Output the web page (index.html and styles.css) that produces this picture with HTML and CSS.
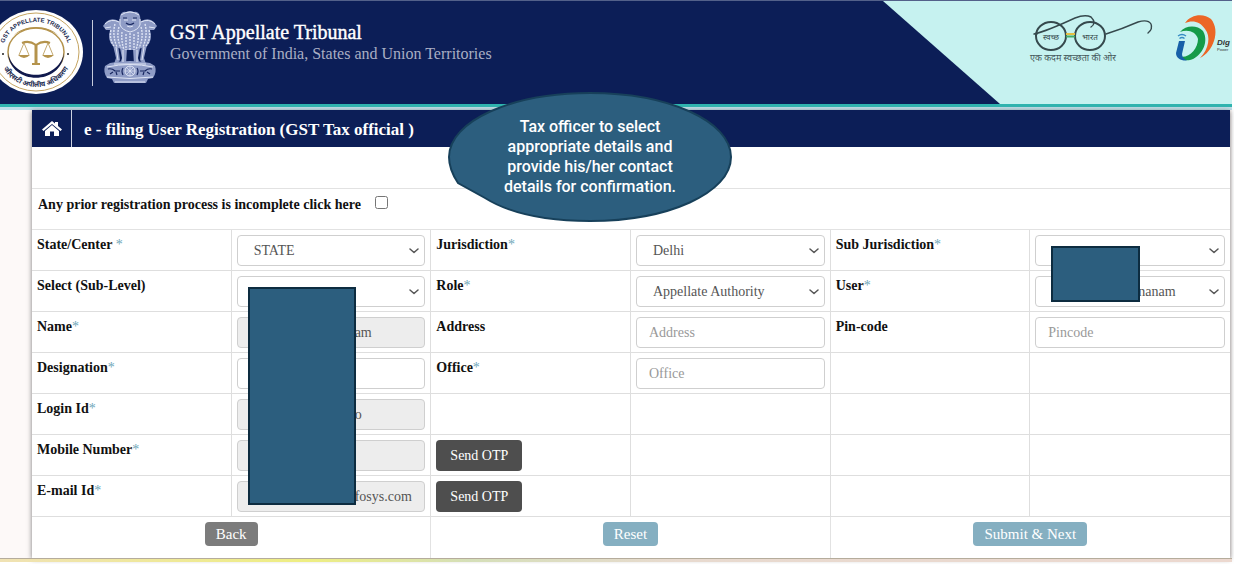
FILE: index.html
```html
<!DOCTYPE html>
<html lang="en">
<head>
<meta charset="utf-8">
<title>GST Appellate Tribunal - User Registration</title>
<link rel="stylesheet" href="styles.css">
</head>
<body>
<svg class="defs" width="0" height="0" aria-hidden="true">
  <symbol id="chevron" viewBox="0 0 10 6"><path d="M1 1 L5 4.500 L9 1" fill="none" stroke="#555" stroke-width="1.500" stroke-linejoin="round" stroke-linecap="round"/></symbol>
</svg>
<header class="header">
  <svg class="seal" viewBox="0 0 94 84" role="img" aria-label="GST Appellate Tribunal seal">
    <defs>
      <path id="arcTop" d="M15 48 A33 29 0 1 1 79 48"/>
      <path id="arcBottom" d="M11 44 A36 33 0 0 0 83 44"/>
    </defs>
    <ellipse cx="47" cy="42" rx="47" ry="42" fill="#fff"/>
    <ellipse cx="47" cy="42" rx="43" ry="39" fill="none" stroke="#c5a562"/>
    <ellipse cx="47" cy="42" rx="28" ry="24" fill="none" stroke="#b4934c" stroke-width="1.500"/>
    <path d="M19 43 C21 76 73 76 75 43 C69 72 25 72 19 43" fill="#10194d"/>
    <path d="M24 26 C35 14 59 14 70 26 C59 16 35 16 24 26" fill="#b4934c"/>
    <text class="seal-text"><textPath href="#arcTop" startOffset="50%" text-anchor="middle">GST APPELLATE TRIBUNAL</textPath></text>
    <text class="seal-text seal-hindi"><textPath href="#arcBottom" startOffset="50%" text-anchor="middle">जीएसटी अपीलीय अधिकरण</textPath></text>
    <g fill="none" stroke="#b4934c">
      <path d="M33 33 Q40 30 47 35 Q54 30 61 33" stroke-width="2"/>
      <path d="M47 34 V54" stroke-width="3"/>
      <path d="M43 54 H51" stroke-width="2"/>
      <path d="M35 33 L30 45 M35 33 L40 45 M59 33 L54 45 M59 33 L64 45" stroke-width="0.800"/>
    </g>
    <path d="M29 45 H41 Q35 51 29 45 M53 45 H65 Q59 51 53 45" fill="#b4934c"/>
    <circle cx="14" cy="44" r="1" fill="#222"/><circle cx="79" cy="44" r="1" fill="#222"/>
  </svg>
  <span class="header-rule"></span>
  <svg class="emblem" viewBox="0 0 56 74" role="img" aria-label="State Emblem of India">
    <g fill="#8f9cc6">
      <path d="M18 6 Q20 1 24 2 Q28 0 32 2 Q36 1 38 6 L39 14 Q38 20 35 23 H21 Q18 19 17 14Z"/>
      <path d="M17 11 Q9 7 4 12 L1 16 L4 20 L8 20 Q5 30 11 36 L22 40 H28 V22Z"/>
      <path d="M39 11 Q47 7 52 12 L55 16 L52 20 L48 20 Q51 30 45 36 L34 40 H28 V22Z"/>
      <path d="M11 35 H16 L18 50 L15 54 H12 L14 48Z M18 38 H25 L24 54 H18 L20 48Z M31 38 H38 L36 48 L38 54 H32Z M40 35 H45 L42 48 L44 54 H41 L38 50Z"/>
      <path d="M8 53 Q28 49 48 53 L53 56 Q55 62 51 68 L46 69 L44 73 H12 L10 69 L5 68 Q1 62 3 56Z"/>
    </g>
    <g fill="none" stroke="#dfe5f5">
      <path d="M3 14 Q9 8 17 12 M53 14 Q47 8 39 12 M19 5 Q28 -1 37 5 M18 9 V15 Q20 20 28 22 Q36 20 38 15 V9 M22 10 H26 M30 10 H34 M25 16 Q28 18 31 16 M3 18 L9 17 M53 18 L47 17"/>
      <path d="M9 20 Q7 29 12 36 M13 14 Q10 25 15 37 M17 17 Q14 27 19 38 M20 22 Q19 30 22 40 M24 24 V40 M28 23 V41 M32 24 V40 M36 22 Q37 30 34 40 M39 17 Q42 27 37 38 M43 14 Q46 25 41 37 M47 20 Q49 29 44 36" stroke-width="1.400" stroke-dasharray="2 1"/>
      <path d="M14 37 L16 50 M21 40 V52 M35 40 V52 M42 37 L40 50 M12 54 H44 M5 57 Q28 52 51 57 M5 67 Q28 70 51 67 M13 72 H43"/>
      <circle cx="28" cy="61" r="5"/>
      <path d="M23 61 H33 M28 56 V66 M24 57 L32 65 M32 57 L24 65" stroke-width="0.700"/>
    </g>
    <g fill="none" stroke="#17265f" stroke-width="1.200">
      <path d="M6 59 Q10 58 13 61 H18 M8 64 L11 62 M15 65 L14 62 M50 59 Q46 58 43 61 H38 M48 64 L45 62 M41 65 L42 62 M21 58 Q19 61 21 65 M35 58 Q37 61 35 65 M21 8 L25 8 M31 8 L35 8 M24 13 Q28 16 32 13"/>
    </g>
  </svg>
  <div class="brand">
    <div class="brand-title">GST Appellate Tribunal</div>
    <div class="brand-sub">Government of India, States and Union Territories</div>
  </div>
  <div class="partners">
    <svg class="glasses" viewBox="0 0 132 54" role="img" aria-label="Swachh Bharat">
      <g fill="none" stroke="#36494d" stroke-width="2" stroke-linecap="round">
        <ellipse cx="27" cy="24" rx="15" ry="14"/><ellipse cx="66" cy="24" rx="15" ry="14"/>
        <path d="M10 22 Q23 19 51 6 Q61 2 67 5 Q73 11 67 15 M10 22 H13 M82 22 Q98 17 114 10 Q124 7 127 12 Q129 17 124 21" stroke-width="1.400"/>
      </g>
      <path d="M42 22 H51" stroke="#e5bf43" stroke-width="2"/><path d="M42 24.500 H51" stroke="#42aa67" stroke-width="2"/>
      <text class="lens-text" x="27" y="28" text-anchor="middle">स्वच्छ</text>
      <text class="lens-text" x="66" y="28" text-anchor="middle">भारत</text>
      <text class="motto" x="49" y="49" text-anchor="middle">एक कदम स्वच्छता की ओर</text>
    </svg>
    <svg class="digital" viewBox="0 0 58 54" role="img" aria-label="Digital India">
      <path d="M11 11 C17 2 30 1 37 7 C47 19 39 40 26 46 C35 37 37 24 31 17 C26 9 18 8 11 11Z" fill="#ec6626"/>
      <path d="M6 20 C12 13 23 13 29 19 C36 31 26 46 16 48 C12 49 7 48 4 44 C14 48 24 37 24 27 C22 19 13 17 6 20Z" fill="#159b49"/>
      <path d="M5 29 H11 L8 42 Q8 46 13 48.500 C7 49 2 46 2 41Z" fill="#1760a8"/>
      <path d="M4 24 Q8 21 12 24 M5.500 26.500 Q8 24.500 10.500 26.500" fill="none" stroke="#368bc4" stroke-width="1.400"/>
      <text class="digital-name" x="43" y="33">Dig</text>
      <text class="digital-tag" x="43" y="39">Power</text>
    </svg>
  </div>
</header>

<main class="page">
  <form class="panel">
    <div class="titlebar">
      <a class="home" href="#" aria-label="Home">
        <svg viewBox="0 0 20 16" width="20" height="16"><path d="M10 0 L13 2.500 V1 H16 V5 L20 8.500 L18.500 10 L10 3 L1.500 10 L0 8.500Z" fill="#fff"/><path d="M10 4 L17 10 V15 H12 V10.500 H8 V15 H3 V10Z" fill="#fff"/></svg>
      </a>
      <h1 class="title">e - filing User Registration (GST Tax official )</h1>
    </div>
    <div class="spacer"></div>
    <div class="prior"><label for="prior">Any prior registration process is incomplete click here</label><input id="prior" type="checkbox"></div>

    <div class="grid">
      <div class="cell"><label for="state">State/Center <i>*</i></label></div>
      <div class="cell"><div class="select"><select id="state"><option>STATE</option></select><svg><use href="#chevron"/></svg></div></div>
      <div class="cell"><label for="jur">Jurisdiction<i>*</i></label></div>
      <div class="cell"><div class="select"><select id="jur"><option>Delhi</option></select><svg><use href="#chevron"/></svg></div></div>
      <div class="cell"><label for="subjur">Sub Jurisdiction<i>*</i></label></div>
      <div class="cell"><div class="select"><select id="subjur"><option></option></select><svg><use href="#chevron"/></svg></div><span class="mask mask-small"></span></div>

      <div class="cell"><label for="level">Select (Sub-Level)</label></div>
      <div class="cell"><div class="select"><select id="level"><option></option></select><svg><use href="#chevron"/></svg></div><span class="mask mask-tall"></span></div>
      <div class="cell"><label for="role">Role<i>*</i></label></div>
      <div class="cell"><div class="select"><select id="role"><option>Appellate Authority</option></select><svg><use href="#chevron"/></svg></div></div>
      <div class="cell"><label for="user">User<i>*</i></label></div>
      <div class="cell"><div class="select"><select id="user" class="tail-user"><option>nanam</option></select><svg><use href="#chevron"/></svg></div></div>

      <div class="cell"><label for="name">Name<i>*</i></label></div>
      <div class="cell"><input id="name" class="field tail" value="am" readonly></div>
      <div class="cell"><label for="addr">Address</label></div>
      <div class="cell"><input id="addr" class="field" placeholder="Address"></div>
      <div class="cell"><label for="pin">Pin-code</label></div>
      <div class="cell"><input id="pin" class="field" placeholder="Pincode"></div>

      <div class="cell"><label for="desig">Designation<i>*</i></label></div>
      <div class="cell"><input id="desig" class="field"></div>
      <div class="cell"><label for="office">Office<i>*</i></label></div>
      <div class="cell"><input id="office" class="field" placeholder="Office"></div>
      <div class="cell"></div>
      <div class="cell"></div>

      <div class="cell"><label for="login">Login Id<i>*</i></label></div>
      <div class="cell"><input id="login" class="field tail" value="o" readonly></div>
      <div class="cell"></div>
      <div class="cell"></div>
      <div class="cell"></div>
      <div class="cell"></div>

      <div class="cell"><label for="mobile">Mobile Number<i>*</i></label></div>
      <div class="cell"><input id="mobile" class="field" readonly></div>
      <div class="cell"><button type="button" class="otp">Send OTP</button></div>
      <div class="cell"></div>
      <div class="cell"></div>
      <div class="cell"></div>

      <div class="cell"><label for="email">E-mail Id<i>*</i></label></div>
      <div class="cell"><input id="email" class="field tail" value="fosys.com" readonly></div>
      <div class="cell"><button type="button" class="otp">Send OTP</button></div>
      <div class="cell"></div>
      <div class="cell"></div>
      <div class="cell"></div>
    </div>

    <div class="actions">
      <div class="action"><button type="button" class="btn btn-back">Back</button></div>
      <div class="action"><button type="reset" class="btn">Reset</button></div>
      <div class="action"><button type="button" class="btn">Submit &amp; Next</button></div>
    </div>

    <div class="callout">
      <svg viewBox="0 0 284 130" aria-hidden="true"><path d="M10 91 C4 82 1 74 1 65 C1 29 64 1 142 1 C220 1 283 29 283 65 C283 101 220 129 142 129 C96 129 61 121 37 106 Z" fill="#2c5e7e" stroke="#17405a" stroke-width="2"/></svg>
      <p>Tax officer to select<br>appropriate details and<br>provide his/her contact<br>details for confirmation.</p>
    </div>
  </form>
</main>
<div class="strip"></div>
</body>
</html>
```
FILE: styles.css
```css
* { box-sizing: border-box; }
body {
  margin: 0;
  padding: 0 2px 2px 0;
  background: #fff;
  color: #111;
  font-family: "Liberation Serif", "Times New Roman", serif;
  font-size: 14px;
}
.defs { position: absolute; }

.header {
  display: flex;
  height: 107px;
  background: #0c1e57;
  border-top: 1px solid #53618a;
  border-bottom: 3px solid #30b5b0;
  overflow: hidden;
}
.seal { flex: none; width: 94px; height: 84px; margin: 9px 0 0 -11px; }
.seal-text { font: 700 6px "Liberation Sans", sans-serif; fill: #222b50; }
.seal-hindi { font: 700 7px "Noto Sans", sans-serif; }
.header-rule { width: 1px; height: 66px; margin: 19px 9px 0; background: #c6cbdc; }
.emblem { flex: none; width: 56px; height: 74px; margin-top: 9px; }
.brand { flex: 1; padding: 20px 0 0 12px; white-space: nowrap; }
.brand-title { font-size: 20px; line-height: 22px; color: #fff; -webkit-text-stroke: 0.4px #fff; }
.brand-sub { font-size: 16px; line-height: 22px; color: #a9aec4; }
.partners {
  display: flex;
  gap: 18px;
  width: 349px;
  padding: 11px 0 0 141px;
  background: #c6f2f0;
  clip-path: polygon(0 0, 100% 0, 100% 100%, 117px 100%);
}
.glasses { flex: none; width: 132px; height: 54px; }
.digital { flex: none; width: 58px; height: 54px; }
.lens-text { font: 8px "Noto Sans", sans-serif; fill: #34474a; }
.motto { font: 9px "Noto Sans", sans-serif; fill: #44565a; }
.digital-name { font: italic 700 8px "Liberation Sans", sans-serif; fill: #333; }
.digital-tag { font: 4px "Liberation Sans", sans-serif; fill: #333; }

.page {
  padding: 3px 2px 0 32px;
  background: linear-gradient(#bfdfe9 0 3px, #fdf9f8 3px);
}
.panel { position: relative; background: #fff; box-shadow: 0 1px 5px #777; }
.titlebar { display: flex; height: 37px; background: #0c1e57; color: #fff; }
.home { display: flex; align-items: center; justify-content: center; width: 40px; border-right: 1px solid #cdd2e0; }
.title { margin: 0; padding-left: 12px; font-size: 17px; line-height: 40px; white-space: nowrap; }
.spacer { height: 42px; border-bottom: 1px solid #e2e2e2; }
.prior { display: flex; align-items: flex-start; gap: 14px; height: 41px; padding: 7px 6px; border-bottom: 1px solid #e2e2e2; font-weight: 700; line-height: 18px; }
.prior input { width: 13px; height: 13px; margin: 0; }

.grid { display: grid; grid-template-columns: repeat(6, 1fr); grid-auto-rows: 41px; }
.cell { position: relative; padding: 5px; border-right: 1px solid #dedede; border-bottom: 1px solid #dedede; }
.cell:nth-child(6n) { border-right: 0; }
.cell label { display: block; padding-top: 1px; font-weight: 700; line-height: 18px; }
.cell i { font-style: normal; font-weight: 400; color: #6ea6b8; }
.select { display: grid; align-items: center; }
.select > * { grid-area: 1 / 1; }
.select svg { justify-self: end; width: 10px; height: 6px; margin-right: 6px; pointer-events: none; }
.select select, .field {
  width: 100%;
  height: 31px;
  padding: 0 12px;
  border: 1px solid #cfcfcf;
  border-radius: 4px;
  background: #fff;
  color: #555;
  font: 14px "Liberation Serif", serif;
}
.select select { padding: 0 16px; appearance: none; }
.select .tail-user { padding: 0 0 0 102px; }
.field:read-only { background: #ededed; }
.field.tail { padding: 0 0 0 117px; }
.field::placeholder { color: #999; }
.mask { position: absolute; z-index: 1; background: #2c5e7e; border: 2px solid #0d2c40; }
.mask-small { left: 21px; top: 16px; width: 89px; height: 56px; }
.mask-tall { left: 16px; top: 16px; width: 108px; height: 218px; }
.otp {
  width: 86px;
  height: 31px;
  padding: 0;
  border: 0;
  border-radius: 4px;
  background: #4e4e4e;
  color: #fff;
  font: 14px "Liberation Serif", serif;
}

.actions { display: grid; grid-template-columns: repeat(3, 1fr); }
.action { display: flex; justify-content: center; height: 41px; padding-top: 5px; border-right: 1px solid #e2e2e2; }
.action:last-child { border-right: 0; }
.btn {
  height: 24px;
  padding: 0 11px;
  border: 0;
  border-radius: 4px;
  background: #85afc1;
  color: #fff;
  font: 15px "Liberation Serif", serif;
}
.btn-back { background: #7c7c7c; }

.callout { position: absolute; z-index: 2; left: 416px; top: -18px; width: 284px; height: 130px; }
.callout svg { display: block; width: 284px; height: 130px; }
.callout p {
  position: absolute;
  inset: 25px 0 auto;
  margin: 0;
  color: #fff;
  text-align: center;
  font: 500 16px/20px Roboto, sans-serif;
}
.strip {
  position: relative;
  height: 4px;
  border-top: 1px solid #b5ac9c;
  background: linear-gradient(90deg, #f0e2b4, #eeee82 25%, #d5dfb8 38%, #e8dacf 55%, #ecd8cf);
}
```
